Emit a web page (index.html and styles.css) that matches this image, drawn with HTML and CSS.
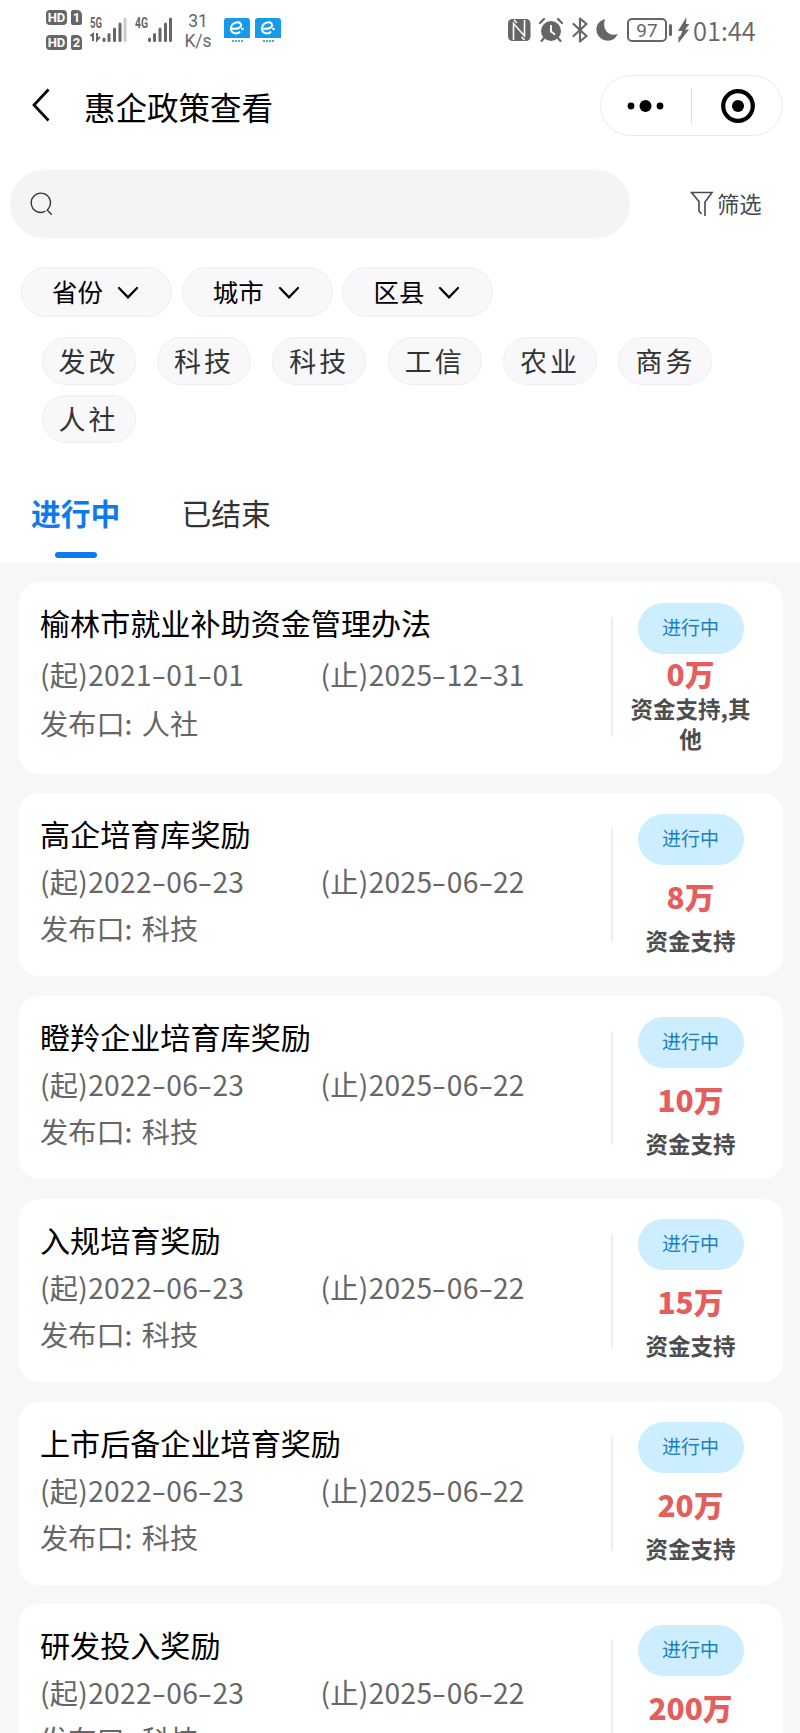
FILE: index.html
```html
<!DOCTYPE html>
<html lang="zh-CN">
  <head>
    <meta charset="UTF-8">
    <meta name="viewport" content="width=device-width, initial-scale=1.0">
    <title>惠企政策查看</title>
    <link rel="stylesheet" href="styles.css">
  </head>
  <body>
    <header class="top">
      <!-- phone status bar -->
      <div class="status">
        <div class="sims">
          <div class="sim"><span class="hd">HD</span><span class="slot">1</span></div>
          <div class="sim"><span class="hd">HD</span><span class="slot">2</span></div>
        </div>
        <svg class="signal5g" width="38" height="26" viewBox="0 0 38 26">
          <text class="net" x="0" y="11" textLength="12" lengthAdjust="spacingAndGlyphs">5G</text>
          <path d="M0.500 19l2.500-2v7M7 16v7l3-3" fill="none" stroke="#666" stroke-width="2"/>
          <path d="M14 22v1.500M19 17.500v6M24.500 12v11.500M30 7v16.500" stroke="#666" stroke-width="3" stroke-linecap="round"/>
          <path d="M35 2v21.500" stroke="#ccc" stroke-width="3" stroke-linecap="round"/>
        </svg>
        <svg class="signal4g" width="38" height="26" viewBox="0 0 38 26">
          <text class="net" x="0" y="11" textLength="13" lengthAdjust="spacingAndGlyphs">4G</text>
          <path d="M14.500 22v1.500M19.500 17.500v6M25 12v11.500M30.500 7v16.500M35.500 2v21.500" stroke="#666" stroke-width="3" stroke-linecap="round"/>
        </svg>
        <div class="speed">31<br>K/s</div>
        <svg class="app" width="26" height="26" viewBox="0 0 26 26">
          <path d="M3 0h20q3 0 3 3v17H0V3q0-3 3-3z" fill="#159be9"/>
          <path d="M8 10.500c5 1 10-1 9-4-1.500-4-9-2-10 3-1 6 6 7.500 9 4" fill="none" stroke="#fff" stroke-width="2"/>
          <circle cx="18.500" cy="11" r="1.300" fill="#fff"/>
          <path d="M8 23h11" stroke="#4fa7d8" stroke-width="1.800" stroke-dasharray="2 1"/>
        </svg>
        <svg class="app" width="26" height="26" viewBox="0 0 26 26">
          <path d="M3 0h20q3 0 3 3v17H0V3q0-3 3-3z" fill="#159be9"/>
          <path d="M8 10.500c5 1 10-1 9-4-1.500-4-9-2-10 3-1 6 6 7.500 9 4" fill="none" stroke="#fff" stroke-width="2"/>
          <circle cx="18.500" cy="11" r="1.300" fill="#fff"/>
          <path d="M8 23h11" stroke="#4fa7d8" stroke-width="1.800" stroke-dasharray="2 1"/>
        </svg>
        <div class="status-right">
          <svg width="23" height="24" viewBox="0 0 23 24">
            <rect x="0" y="1" width="22.500" height="22" rx="4.500" fill="#666"/>
            <path d="M5.500 22V5.500l11 12.500V2M6 2l3 3M16.500 22l-3-3" fill="none" stroke="#fff" stroke-width="1.600"/>
          </svg>
          <svg class="alarm" width="24" height="24" viewBox="0 0 24 24">
            <circle cx="12" cy="13" r="10" fill="#666"/>
            <path d="M1 5l4-4M23 5l-4-4M5 20l-2.500 3M19 20l2.500 3" stroke="#666" stroke-width="2.200" stroke-linecap="round"/>
            <path d="M12 7v6.500l4 3" fill="none" stroke="#fff" stroke-width="2"/>
          </svg>
          <svg class="bluetooth" width="16" height="26" viewBox="0 0 16 26">
            <path d="M1.500 7l13 12L8 24.500v-23L14.500 7l-13 12" fill="none" stroke="#666" stroke-width="2.200" stroke-linejoin="round" stroke-linecap="round"/>
          </svg>
          <svg class="moon" width="22" height="24" viewBox="0 0 22 24">
            <path d="M9 1C2 3-1 9 1 15c3 9 17 11 20.500 1C13 19 5.500 12 9 1z" fill="#666"/>
          </svg>
          <span class="battery">97</span>
          <span class="battery-tip"></span>
          <svg class="bolt" width="12" height="26" viewBox="0 0 12 26">
            <path d="M8.500 0L0 14h4.500L2 19.500H0.500V26L11 12.500H7L11.500 7H8z" fill="#666"/>
          </svg>
          <span class="clock">01:44</span>
        </div>
      </div>

      <div class="nav">
        <svg width="18" height="34" viewBox="0 0 18 34">
          <path d="M16.500 1.500L2 17l14.500 15.500" fill="none" stroke="#000" stroke-width="2.700"/>
        </svg>
        <h1>惠企政策查看</h1>
        <div class="capsule">
          <svg width="38" height="14" viewBox="0 0 38 14">
            <circle cx="4" cy="7" r="3.400"/>
            <circle cx="18.500" cy="7" r="6"/>
            <circle cx="33" cy="7" r="3.400"/>
          </svg>
          <span class="capsule-line"></span>
          <svg width="34" height="34" viewBox="0 0 34 34">
            <circle cx="17" cy="17" r="14.800" fill="none" stroke="#000" stroke-width="4.200"/>
            <circle cx="17" cy="17" r="6"/>
          </svg>
        </div>
      </div>

      <div class="search-row">
        <div class="search">
          <svg width="24" height="24" viewBox="0 0 24 24">
            <path d="M15.500 19.200A9.600 9.600 0 1 1 18 17.200l-.8 .8 4.600 4.800" fill="none" stroke="#333" stroke-width="1.400"/>
          </svg>
        </div>
        <div class="filter">
          <svg width="24" height="26" viewBox="0 0 24 26">
            <path d="M15 25V11L22 1.500H1.500L9 10.500v9.500l2.500 3" fill="none" stroke="#444a50" stroke-width="1.600"/>
          </svg>
          <span>筛选</span>
        </div>
      </div>

      <div class="selects">
        <div class="select">省份<svg width="22" height="14" viewBox="0 0 22 14"><path d="M2 2l9 9.300L20 2" fill="none" stroke="#000" stroke-width="2.200" stroke-linecap="round"/></svg></div>
        <div class="select">城市<svg width="22" height="14" viewBox="0 0 22 14"><path d="M2 2l9 9.300L20 2" fill="none" stroke="#000" stroke-width="2.200" stroke-linecap="round"/></svg></div>
        <div class="select">区县<svg width="22" height="14" viewBox="0 0 22 14"><path d="M2 2l9 9.300L20 2" fill="none" stroke="#000" stroke-width="2.200" stroke-linecap="round"/></svg></div>
      </div>

      <div class="tags">
        <span class="tag">发改</span>
        <span class="tag">科技</span>
        <span class="tag">科技</span>
        <span class="tag">工信</span>
        <span class="tag">农业</span>
        <span class="tag">商务</span>
        <span class="tag">人社</span>
      </div>

      <div class="tabs">
        <div class="tab active">进行中</div>
        <div class="tab">已结束</div>
      </div>
    </header>

    <main class="list">
      <div class="card tall">
        <div class="info">
          <h2>榆林市就业补助资金管理办法</h2>
          <div class="dates"><span>(起)2021<i>-</i>01<i>-</i>01</span><span>(止)2025<i>-</i>12<i>-</i>31</span></div>
          <div class="dept">发布口: 人社</div>
        </div>
        <div class="side">
          <span class="badge">进行中</span>
          <strong class="amount">0万</strong>
          <span class="kind">资金支持,其他</span>
        </div>
      </div>

      <div class="card">
        <div class="info">
          <h2>高企培育库奖励</h2>
          <div class="dates"><span>(起)2022<i>-</i>06<i>-</i>23</span><span>(止)2025<i>-</i>06<i>-</i>22</span></div>
          <div class="dept">发布口: 科技</div>
        </div>
        <div class="side">
          <span class="badge">进行中</span>
          <strong class="amount">8万</strong>
          <span class="kind">资金支持</span>
        </div>
      </div>

      <div class="card">
        <div class="info">
          <h2>瞪羚企业培育库奖励</h2>
          <div class="dates"><span>(起)2022<i>-</i>06<i>-</i>23</span><span>(止)2025<i>-</i>06<i>-</i>22</span></div>
          <div class="dept">发布口: 科技</div>
        </div>
        <div class="side">
          <span class="badge">进行中</span>
          <strong class="amount">10万</strong>
          <span class="kind">资金支持</span>
        </div>
      </div>

      <div class="card">
        <div class="info">
          <h2>入规培育奖励</h2>
          <div class="dates"><span>(起)2022<i>-</i>06<i>-</i>23</span><span>(止)2025<i>-</i>06<i>-</i>22</span></div>
          <div class="dept">发布口: 科技</div>
        </div>
        <div class="side">
          <span class="badge">进行中</span>
          <strong class="amount">15万</strong>
          <span class="kind">资金支持</span>
        </div>
      </div>

      <div class="card">
        <div class="info">
          <h2>上市后备企业培育奖励</h2>
          <div class="dates"><span>(起)2022<i>-</i>06<i>-</i>23</span><span>(止)2025<i>-</i>06<i>-</i>22</span></div>
          <div class="dept">发布口: 科技</div>
        </div>
        <div class="side">
          <span class="badge">进行中</span>
          <strong class="amount">20万</strong>
          <span class="kind">资金支持</span>
        </div>
      </div>

      <!-- runs past the bottom of the screen -->
      <div class="card">
        <div class="info">
          <h2>研发投入奖励</h2>
          <div class="dates"><span>(起)2022<i>-</i>06<i>-</i>23</span><span>(止)2025<i>-</i>06<i>-</i>22</span></div>
          <div class="dept">发布口: 科技</div>
        </div>
        <div class="side">
          <span class="badge">进行中</span>
          <strong class="amount">200万</strong>
        </div>
      </div>
    </main>
  </body>
</html>
```
FILE: styles.css
```css
* {
  box-sizing: border-box;
}
body {
  margin: 0;
  width: 800px;
  height: 1733px;
  overflow: hidden;
  background-color: #f7f7fa;
  font-family: "Noto Sans CJK SC", "Noto Sans", sans-serif;
  color: #000;
}
svg {
  display: block;
  flex: none;
}
.top {
  height: 563px;
  background-color: #fff;
}

/* status bar */
.status {
  display: flex;
  height: 60px;
  padding-left: 46px;
  color: #666;
  font-family: Roboto, sans-serif;
}
.sims {
  display: flex;
  flex-direction: column;
  gap: 10px;
  padding-top: 10px;
  width: 44px;
}
.sim {
  display: flex;
  gap: 4px;
}
.hd, .slot {
  height: 15px;
  border-radius: 4px;
  background-color: #666;
  color: #fff;
  font-size: 13px;
  font-weight: bold;
  line-height: 15px;
  text-align: center;
}
.hd {
  width: 21px;
}
.slot {
  width: 11px;
  border-radius: 2px 5px 2px 2px;
}
.net {
  font-size: 14px;
  font-weight: bold;
  fill: #666;
}
.signal5g {
  margin-top: 17px;
}
.signal4g {
  margin: 17px 0 0 7px;
}
.speed {
  width: 50px;
  padding-top: 11px;
  font-size: 17.500px;
  line-height: 20px;
  text-align: center;
}
.app {
  margin: 18px 5px 0 0;
}
.speed + .app {
  margin-left: 1px;
}
.status-right {
  display: flex;
  align-items: center;
  height: 60px;
  margin-left: auto;
  padding-right: 42px;
}
.alarm {
  margin-left: 8px;
}
.bluetooth {
  margin-left: 9px;
}
.moon {
  margin-left: 8px;
}
.battery {
  width: 40px;
  height: 24px;
  margin-left: 9px;
  border: 2px solid #666;
  border-radius: 5px;
  font-size: 19px;
  line-height: 21px;
  text-align: center;
}
.battery-tip {
  width: 3px;
  height: 12px;
  margin-left: 2px;
  border-radius: 2px;
  background-color: #666;
}
.bolt {
  margin-left: 6px;
}
.clock {
  width: 65px;
  margin: -1px 0 0 3px;
  font-family: "Noto Sans CJK SC", sans-serif;
  font-size: 25.500px;
  font-weight: 350;
  line-height: 30px;
}

/* title bar */
.nav {
  display: flex;
  align-items: center;
  height: 90px;
  padding: 0 17px 0 32px;
}
.nav h1 {
  margin: 1px 0 0 34px;
  font-size: 31.500px;
  font-weight: normal;
  line-height: 40px;
}
.capsule {
  display: flex;
  align-items: center;
  width: 183px;
  height: 61px;
  margin: 1px 0 0 auto;
  padding-left: 26px;
  border: 1px solid #ebebeb;
  border-radius: 31px;
}
.capsule-line {
  width: 1px;
  height: 36px;
  margin: 0 29px 0 26px;
  background-color: #ddd;
}

/* search and filter */
.search-row {
  display: flex;
  align-items: center;
  height: 68px;
  margin-top: 20px;
  padding-left: 10px;
}
.search {
  display: flex;
  align-items: center;
  width: 620px;
  height: 68px;
  padding-left: 20px;
  border-radius: 34px;
  background-color: #f4f4f4;
}
.filter {
  display: flex;
  align-items: center;
  gap: 3px;
  margin-left: 60px;
  color: #444a50;
  font-size: 22.300px;
  line-height: 30px;
}
.filter span {
  margin-top: -2px;
}
.selects {
  display: flex;
  gap: 9.700px;
  margin-top: 29px;
  padding-left: 21px;
}
.select {
  display: flex;
  align-items: center;
  width: 151px;
  height: 50px;
  padding: 0 0 4px 30px;
  border: 1px solid #eee;
  border-radius: 26px;
  background-color: #f8f8fa;
  font-size: 25.500px;
}
.select svg {
  margin: 5px 0 0 14px;
}
.tags {
  display: flex;
  flex-wrap: wrap;
  gap: 10px 21.400px;
  margin-top: 20px;
  padding-left: 41.500px;
}
.tag {
  width: 94px;
  height: 48px;
  padding-left: 16px;
  border: 1px solid #eee;
  border-radius: 24px;
  background-color: #f8f8fa;
  color: #333;
  font-size: 27px;
  line-height: 46px;
  letter-spacing: 3px;
}

/* tabs */
.tabs {
  display: flex;
  gap: 61px;
  margin-top: 48px;
  padding-left: 31px;
}
.tab {
  color: #333;
  font-size: 29.800px;
  line-height: 42px;
}
.active {
  color: #0f7bea;
  font-weight: bold;
}
.active::after {
  content: "";
  display: block;
  width: 42px;
  height: 6px;
  margin: 19px auto 0;
  border-radius: 3px;
  background-color: #0f7bea;
}

/* policy list */
.list {
  display: flex;
  flex-direction: column;
  gap: 19.800px;
  padding: 19px 17px 0 19px;
}
.card {
  display: flex;
  flex: none;
  height: 183px;
  border-radius: 20px;
  background-color: #fff;
}
.info {
  width: 592px;
  padding: 16px 0 0 21px;
}
.card h2 {
  margin: 0;
  font-size: 30.100px;
  font-weight: normal;
  line-height: 48px;
}
.dates {
  display: flex;
}
.dates span {
  width: 280.500px;
}
.dates, .dept {
  color: #666;
  font-size: 28.200px;
  line-height: 47px;
}
.dates {
  letter-spacing: 0.300px;
}
.dept {
  word-spacing: 3px;
}
.dates i {
  display: inline-block;
  width: 14.300px;
  font-style: normal;
  text-align: center;
  transform: scaleX(1.500);
}
.side {
  display: flex;
  flex-direction: column;
  align-items: center;
  width: 172px;
  padding: 20.500px 13px 0 0;
  background: linear-gradient(#eee, #eee) 0 35px / 2px 114px no-repeat;
}
.badge {
  width: 106px;
  height: 51px;
  border-radius: 26px;
  background-color: #cdeeff;
  color: #1c80c0;
  font-size: 19px;
  line-height: 48px;
  text-align: center;
}
.amount {
  color: #e45e5e;
  font-size: 29.800px;
  font-weight: 900;
  line-height: 62px;
}
.kind {
  width: 130px;
  color: #4d4d4d;
  font-size: 22.500px;
  font-weight: bold;
  line-height: 27px;
  text-align: center;
}

/* first card, its kind takes two lines */
.tall {
  height: 191.500px;
}
.tall .dates {
  margin-top: 3px;
}
.tall .dates, .tall .dept {
  line-height: 49px;
}
.tall .side {
  background-size: 2px 120px;
}
.tall .amount {
  line-height: 39px;
}
.tall .kind {
  line-height: 30px;
}
```
